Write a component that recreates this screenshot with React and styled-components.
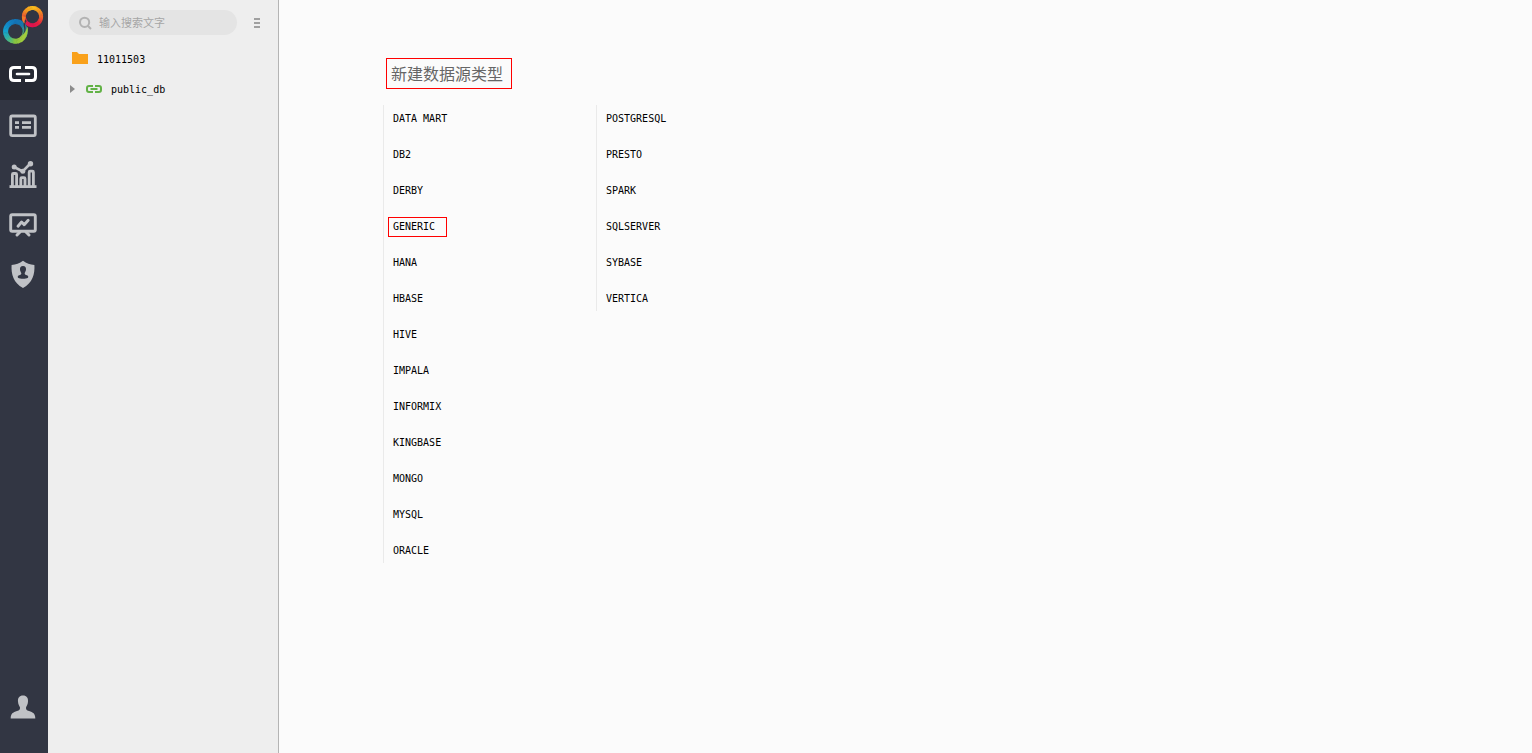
import React from "react";
import styled, { createGlobalStyle } from "styled-components";

const GlobalStyle = createGlobalStyle`
  * { box-sizing: border-box; }
  body { margin: 0; background: #fbfbfb; }
  body, button, input {
    font-family: "DejaVu Sans Mono", "Noto Sans CJK SC", monospace;
    font-size: 10px;
    color: #000;
  }
  ul { list-style: none; margin: 0; padding: 0; }
  svg { display: block; flex: none; }
`;

const Layout = styled.div`
  display: flex;
  min-height: 100vh;
`;

const NavBar = styled.nav`
  flex: none;
  width: 48px;
  display: flex;
  flex-direction: column;
  background: #323643;
`;

const Brand = styled.a`
  display: block;
  height: 50px;
`;

const NavButton = styled.button`
  display: block;
  width: 100%;
  height: 50px;
  padding: 0 0 0 9px;
  border: 0;
  background: ${(p) => (p.$active ? "#262933" : "transparent")};
  color: ${(p) => (p.$active ? "#fff" : "#c0c2c6")};
  cursor: pointer;
`;

const NavFooter = styled.div`
  margin-top: auto;
  padding-bottom: 20px;
`;

const Sidebar = styled.aside`
  flex: none;
  width: 231px;
  padding: 10px 14px 0 21px;
  background: #eee;
  border-right: 1px solid #b4b4b4;
`;

const SearchRow = styled.div`
  display: flex;
  align-items: center;
  justify-content: space-between;
  margin-bottom: 9px;
`;

const SearchBox = styled.label`
  display: flex;
  align-items: center;
  gap: 6px;
  width: 168px;
  height: 25px;
  padding: 0 10px;
  border-radius: 13px;
  background: #e4e4e4;
`;

const SearchInput = styled.input`
  flex: 1;
  min-width: 0;
  padding: 2px 0 0;
  border: 0;
  outline: 0;
  background: transparent;
  font-size: 11px;
  &::placeholder { color: #a6a6a6; opacity: 1; }
`;

const MenuButton = styled.button`
  padding: 4px;
  border: 0;
  background: transparent;
  cursor: pointer;
`;

const TreeRow = styled.button`
  display: flex;
  align-items: center;
  gap: ${(p) => p.$gap}px;
  width: 100%;
  height: 30px;
  padding: 0 0 0 1px;
  border: 0;
  background: transparent;
  cursor: pointer;
`;

const Main = styled.main`
  flex: 1;
  min-width: 0;
  padding: 58px 104px 0;
`;

const Title = styled.h1`
  width: fit-content;
  margin: 0 0 16px 3px;
  padding: 0 8px 0 4px;
  border: 1px solid #f00;
  color: #666;
  font: 400 16px/29px "Noto Sans CJK SC", sans-serif;
`;

const Columns = styled.div`
  display: flex;
  align-items: flex-start;
`;

const TypeList = styled.ul`
  display: flex;
  flex-direction: column;
  gap: 10px;
  width: 213px;
  && { padding-left: 4px; }
  border-left: 1px solid #eaeaea;
`;

const TypeItem = styled.li`
  display: flex;
  align-items: center;
  height: 26px;
  padding-top: 2px;
`;

const TypeButton = styled.button`
  height: 20px;
  padding: 0 11px 0 4px;
  border: 1px solid ${(p) => (p.$marked ? "#f00" : "transparent")};
  background: transparent;
  line-height: 18px;
  cursor: pointer;
`;

/* Colours run clockwise, starting from the top of each ring. */
const warmRing = ["#fbc01d", "#f8981f", "#f0602c", "#e8203f", "#e3104f", "#e01a50", "#ea5a30", "#f6a01e"];
const coolRing = ["#1273b8", "#1b78a8", "#48a884", "#a3cc3c", "#86c440", "#35b3a0", "#12a0cf", "#1285c6"];

const mix = (from, to, t) => {
  const channel = (hex, i) => parseInt(hex.slice(1 + i * 2, 3 + i * 2), 16);
  return `rgb(${[0, 1, 2].map((i) => Math.round(channel(from, i) * (1 - t) + channel(to, i) * t)).join(",")})`;
};

const Ring = ({ cx, cy, r, width, colors }) => {
  const steps = 48;
  const point = (angle) => `${(cx + r * Math.sin(angle)).toFixed(2)} ${(cy - r * Math.cos(angle)).toFixed(2)}`;
  return Array.from({ length: steps }, (_, i) => {
    const a = (i / steps) * Math.PI * 2;
    const position = (i / steps) * colors.length;
    const index = Math.floor(position);
    return (
      <path
        key={i}
        d={`M${point(a)}A${r} ${r} 0 0 1 ${point(a + 0.18)}`}
        stroke={mix(colors[index], colors[(index + 1) % colors.length], position - index)}
        strokeWidth={width}
        fill="none"
      />
    );
  });
};

const Logo = () => (
  <svg width="48" height="50" viewBox="0 0 48 50">
    <Ring cx={32.5} cy={16.6} r={8.6} width={4} colors={warmRing} />
    <Ring cx={15.4} cy={31.4} r={9.8} width={5} colors={coolRing} />
    <path fill="#323643" d="M25.200 19.500C23.300 22 23.200 24.500 24.200 28.500C24.600 31 23.900 32.500 22.700 34.500C25.500 32.300 26.200 29.500 25.300 26.500C24.800 24.500 25.200 22.500 26.800 21Z" />
    <path fill="#a3cc3c" d="M27.500 26.500C28.500 31 27 36.500 23.500 40L21.500 36.500C25 33.500 26.300 30.500 27.500 26.500Z" />
    <path fill="#f07a28" d="M22 16C21.700 19 22.500 22 24.600 23.600C24.400 21 24.800 19 25.800 17Z" />
  </svg>
);

const LinkIcon = () => (
  <svg width="28" height="18" viewBox="0 0 28 18" fill="none" stroke="currentColor" strokeWidth="3">
    <path d="M12 1.500H5Q1.500 1.500 1.500 5V11Q1.500 14.500 5 14.500H12M16 1.500H23Q26.500 1.500 26.500 5V11Q26.500 14.500 23 14.500H16" />
    <path d="M8 8H20" strokeLinecap="round" strokeWidth="2.6" />
  </svg>
);

const SmallLinkIcon = () => (
  <svg width="16" height="8" viewBox="0 0 16 8" fill="none" stroke="currentColor" strokeWidth="2">
    <path d="M7 1H3Q1 1 1 3V5Q1 7 3 7H7M9 1H13Q15 1 15 3V5Q15 7 13 7H9" />
    <path d="M4.500 4H11.500" />
  </svg>
);

const ListIcon = () => (
  <svg width="28" height="28" viewBox="0 0 28 28" fill="none" stroke="currentColor">
    <rect x="1.700" y="5" width="24.600" height="19.600" rx="1.500" strokeWidth="2.800" />
    <path d="M6 11.600H10M13 11.600H22M6 16.400H10M13 16.400H22" strokeWidth="2.600" />
  </svg>
);

const ChartIcon = () => (
  <svg width="28" height="28" viewBox="0 0 28 28" fill="none" stroke="currentColor">
    <path d="M0.500 25.600H27.500" strokeWidth="2.800" />
    <path
      d="M3.400 25V13.500Q3.400 12.500 4.400 12.500H6.600Q7.600 12.500 7.600 13.500V25M11.800 25V17.700Q11.800 16.700 12.800 16.700H15Q16 16.700 16 17.700V25M20.200 25V11.200Q20.200 10.200 21.200 10.200H23.400Q24.400 10.200 24.400 11.200V25"
      strokeWidth="2.800"
    />
    <path d="M5.200 6L13.600 10.500L21.400 2.500" strokeWidth="2.600" />
    <circle cx="5.200" cy="6" r="2.500" fill="currentColor" stroke="none" />
    <circle cx="13.800" cy="10.300" r="2.500" fill="currentColor" stroke="none" />
    <circle cx="21.500" cy="2.700" r="2.700" fill="currentColor" stroke="none" />
  </svg>
);

const BoardIcon = () => (
  <svg width="28" height="28" viewBox="0 0 28 28" fill="none" stroke="currentColor">
    <rect x="1.700" y="3.700" width="24.600" height="16.600" rx="1.500" strokeWidth="2.900" />
    <path d="M9 15.200L12.600 11L15.200 13.800L19.200 9.300" strokeWidth="2.900" strokeLinecap="round" strokeLinejoin="round" />
    <path d="M11 21L8 24M17 21L20 24" strokeWidth="3" strokeLinecap="round" />
  </svg>
);

const ShieldIcon = () => (
  <svg width="28" height="30" viewBox="0 0 28 30">
    <path
      fill="currentColor"
      d="M14 0.800C17.500 3.500 21 4.800 25.400 5C26 14 23.500 23 14 28C4.500 23 2 14 2.600 5C7 4.800 10.500 3.500 14 0.800Z"
    />
    <path
      fill="#323643"
      d="M14 6C16.300 6 17.200 7.600 17 9.500C16.900 11.200 16 12.300 15.700 13C15.600 14.500 16.400 14.900 18 15.300C19.300 15.700 19.500 16.800 19 17.700C16.500 19.200 11.500 19.200 9 17.700C8.500 16.800 8.700 15.700 10 15.300C11.600 14.900 12.400 14.500 12.300 13C12 12.300 11.100 11.200 11 9.500C10.800 7.600 11.700 6 14 6Z"
    />
  </svg>
);

const UserIcon = () => (
  <svg width="28" height="28" viewBox="0 0 28 28" fill="currentColor">
    <path d="M14 1.500C17.600 1.500 19.300 4 19 7.500C18.900 10.500 17.600 12 17 13.400C16.900 15.400 17.500 16 20 17C24 18.300 26.300 19.500 26.300 24.600H1.700C1.700 19.500 4 18.300 8 17C10.500 16 11.100 15.400 11 13.400C10.400 12 9.100 10.500 9 7.500C8.700 4 10.400 1.500 14 1.500Z" />
  </svg>
);

const SearchIcon = () => (
  <svg width="14" height="14" viewBox="0 0 14 14" fill="none" stroke="#b3b3b3" strokeWidth="2">
    <circle cx="5.600" cy="6.300" r="4.600" />
    <path d="M8.800 9.800L12 13" />
  </svg>
);

const MenuIcon = () => (
  <svg width="6" height="10" viewBox="0 0 6 10" fill="#a0a0a0">
    <path d="M0 0H6V2H0ZM0 4H6V6H0ZM0 8H6V10H0Z" />
  </svg>
);

const FolderIcon = () => (
  <svg width="18" height="14" viewBox="0 0 18 14">
    <path fill="#f9a11b" d="M2 0H7L9 2H18V12H2Z" />
  </svg>
);

const ArrowIcon = () => (
  <svg width="5" height="8" viewBox="0 0 5 8">
    <path fill="#8c8c8c" d="M0 0L5 4L0 8Z" />
  </svg>
);

const TreeLink = styled.span`
  display: flex;
  padding-left: 2px;
  color: #62b246;
`;

const TreeLabel = styled.span`
  padding-top: 1px;
`;

const sections = [
  { label: "数据连接", Icon: LinkIcon, active: true },
  { label: "数据集", Icon: ListIcon },
  { label: "图表", Icon: ChartIcon },
  { label: "仪表盘", Icon: BoardIcon },
  { label: "权限", Icon: ShieldIcon },
];

const typeColumns = [
  ["DATA MART", "DB2", "DERBY", "GENERIC", "HANA", "HBASE", "HIVE", "IMPALA", "INFORMIX", "KINGBASE", "MONGO", "MYSQL", "ORACLE"],
  ["POSTGRESQL", "PRESTO", "SPARK", "SQLSERVER", "SYBASE", "VERTICA"],
];

export default function App() {
  return (
    <>
      <GlobalStyle />
      <Layout>
        <NavBar>
          <Brand href="#" aria-label="首页">
            <Logo />
          </Brand>
          {sections.map(({ label, Icon, active }) => (
            <NavButton key={label} aria-label={label} $active={active}>
              <Icon />
            </NavButton>
          ))}
          <NavFooter>
            <NavButton aria-label="用户">
              <UserIcon />
            </NavButton>
          </NavFooter>
        </NavBar>
        <Sidebar>
          <SearchRow>
            <SearchBox>
              <SearchIcon />
              <SearchInput type="text" aria-label="搜索" placeholder="输入搜索文字" />
            </SearchBox>
            <MenuButton aria-label="菜单">
              <MenuIcon />
            </MenuButton>
          </SearchRow>
          <TreeRow $gap={9}>
            <FolderIcon />
            <TreeLabel>11011503</TreeLabel>
          </TreeRow>
          <TreeRow $gap={9}>
            <ArrowIcon />
            <TreeLink>
              <SmallLinkIcon />
            </TreeLink>
            <TreeLabel>public_db</TreeLabel>
          </TreeRow>
        </Sidebar>
        <Main>
          <Title>新建数据源类型</Title>
          <Columns>
            {typeColumns.map((types) => (
              <TypeList key={types[0]}>
                {types.map((type) => (
                  <TypeItem key={type}>
                    <TypeButton $marked={type === "GENERIC"}>{type}</TypeButton>
                  </TypeItem>
                ))}
              </TypeList>
            ))}
          </Columns>
        </Main>
      </Layout>
    </>
  );
}
